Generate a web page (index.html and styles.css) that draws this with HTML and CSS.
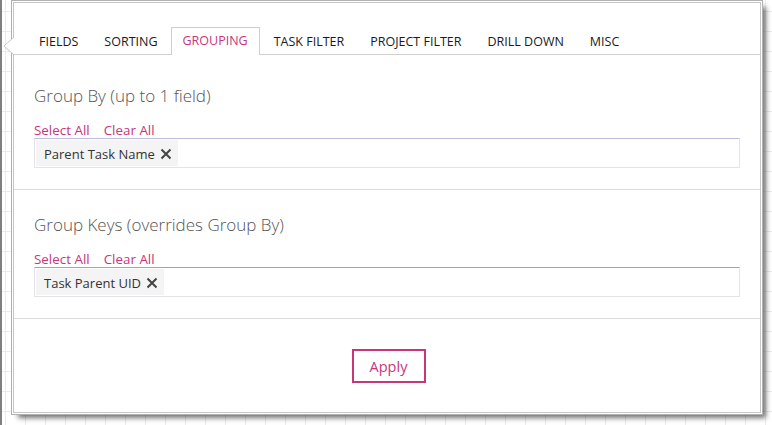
FILE: index.html
```html
<!DOCTYPE html>
<html>
<head>
<meta charset="utf-8">
<link rel="stylesheet" href="styles.css">
</head>
<body>
<div class="screen">
  <div class="panel">
    <svg class="pointer" width="12" height="20" viewBox="0 0 12 20"><path d="M11 0 L1 9 L11 18" fill="#fff" stroke="#c6c6c6" stroke-width="1"/></svg>
    <nav class="tabs">
      <div class="tab">FIELDS</div>
      <div class="tab">SORTING</div>
      <div class="tab active">GROUPING</div>
      <div class="tab">TASK FILTER</div>
      <div class="tab">PROJECT FILTER</div>
      <div class="tab">DRILL DOWN</div>
      <div class="tab">MISC</div>
    </nav>
    <section class="section first">
      <h2 class="heading">Group By (up to 1 field)</h2>
      <div class="links"><a class="link">Select All</a><a class="link">Clear All</a></div>
      <div class="box">
        <span class="chip">Parent Task Name<svg class="x" width="12" height="12" viewBox="0 0 12 12"><path d="M1.5 1.5 L10.5 10.5 M10.5 1.5 L1.5 10.5" stroke="#444" stroke-width="2"/></svg></span>
      </div>
    </section>
    <section class="section second">
      <h2 class="heading">Group Keys (overrides Group By)</h2>
      <div class="links"><a class="link">Select All</a><a class="link">Clear All</a></div>
      <div class="box focus">
        <span class="chip">Task Parent UID<svg class="x" width="12" height="12" viewBox="0 0 12 12"><path d="M1.5 1.5 L10.5 10.5 M10.5 1.5 L1.5 10.5" stroke="#444" stroke-width="2"/></svg></span>
      </div>
    </section>
    <div class="footer">
      <button class="apply">Apply</button>
    </div>
  </div>
</div>
</body>
</html>
```
FILE: styles.css
```css
html, body {
  margin: 0;
  padding: 0;
}
body {
  width: 772px;
  height: 425px;
  overflow: hidden;
  font-family: "Open Sans", "Noto Sans", sans-serif;
  background-color: #fff;
  background-image:
    linear-gradient(to right, #ebebeb 1px, transparent 1px),
    linear-gradient(to bottom, #ebebeb 1px, transparent 1px);
  background-size: 20px 20px;
  background-position: 5px 11px;
}
.screen {
  height: 425px;
  border-left: 2px solid #808080;
  box-sizing: border-box;
  padding: 2px 0 0 11px;
}
.panel {
  position: relative;
  width: 746px;
  height: 409px;
  border: 1px solid #c6c6c6;
  background: #fff;
  box-shadow: 0 0 0 1px #fff, 0 0 0 2px #b0b0b0, 5px 5px 5px rgba(0,0,0,0.55);
}
.pointer {
  position: absolute;
  left: -11px;
  top: 34px;
}
.tabs {
  display: flex;
  align-items: flex-end;
  padding: 24px 0 0 12px;
  border-bottom: 1px solid #d0d0d0;
}
.tab {
  height: 26px;
  line-height: 26px;
  padding: 0 12px;
  border: 1px solid transparent;
  border-bottom: none;
  margin-bottom: -1px;
  font-size: 12.5px;
  color: #1a1a1a;
}
.tab.active {
  height: 27px;
  padding: 0 11px 0 11px;
  margin-right: 1px;
  border-color: #cfcfcf;
  background: #fff;
  color: #c7367b;
}
.section {
  padding: 0 20px;
  border-bottom: 1px solid #dcdcdc;
}
.section.first {
  padding-top: 29px;
  padding-bottom: 21px;
}
.section.second {
  padding-top: 23px;
  padding-bottom: 21px;
}
.heading {
  margin: 0;
  font-size: 17px;
  line-height: 24px;
  font-weight: 300;
  color: #555;
}
.links {
  margin-top: 14px;
  display: flex;
  gap: 14px;
  height: 16px;
  line-height: 16px;
}
.link {
  font-size: 13.4px;
  color: #c7367b;
}
.box {
  height: 26px;
  border: 1px solid #e3e3ec;
  border-top-color: #bcbcda;
  display: flex;
  align-items: stretch;
  padding: 1px;
}
.box.focus {
  border-top-color: #9d9de6;
}
.chip {
  display: flex;
  align-items: center;
  gap: 5px;
  padding: 1px 6px 0 8px;
  background: #f4f4f4;
  font-size: 13px;
  color: #333;
}
.footer {
  display: flex;
  justify-content: center;
  padding-top: 30px;
}
.apply {
  width: 74px;
  height: 34px;
  margin-left: 3px;
  border: 2px solid #c7367b;
  background: #fff;
  color: #c7367b;
  font-family: "Open Sans", "Noto Sans", sans-serif;
  font-size: 14.5px;
  padding: 0;
}
```
